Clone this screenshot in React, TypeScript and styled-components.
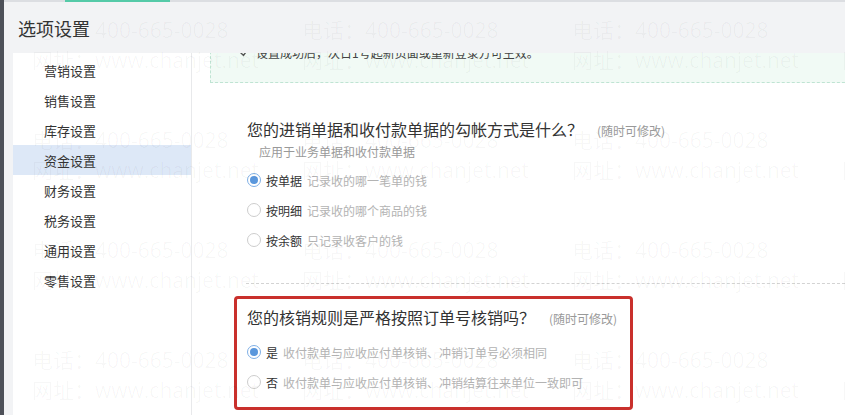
import React from "react";
import styled, { createGlobalStyle } from "styled-components";

const GlobalStyle = createGlobalStyle`
  html, body {
    margin: 0;
    padding: 0;
  }
  body {
    font-family: "Noto Sans CJK SC", "Noto Sans", sans-serif;
  }
`;

const navItems = [
  "营销设置",
  "销售设置",
  "库存设置",
  "资金设置",
  "财务设置",
  "税务设置",
  "通用设置",
  "零售设置",
];

const matchOptions = [
  { label: "按单据", desc: "记录收的哪一笔单的钱", checked: true },
  { label: "按明细", desc: "记录收的哪个商品的钱", checked: false },
  { label: "按余额", desc: "只记录收客户的钱", checked: false },
];

const ruleOptions = [
  { label: "是", desc: "收付款单与应收应付单核销、冲销订单号必须相同", checked: true },
  { label: "否", desc: "收付款单与应收应付单核销、冲销结算往来单位一致即可", checked: false },
];

const App = () => {
  return (
    <>
      <GlobalStyle />
      <Page>
        <LeftEdge />
        <Dialog>
          <TopStrip>
            <ActiveTab />
          </TopStrip>
          <Header>选项设置</Header>
          <Body>
            {/* 左侧菜单 */}
            <Sidebar>
              {navItems.map((item) => (
                <NavItem key={item} $active={item === "资金设置"}>
                  {item}
                </NavItem>
              ))}
            </Sidebar>

            {/* 右侧内容 */}
            <Main>
              <Notice>
                <svg width="10" height="10" viewBox="0 0 10 10">
                  <path
                    d="M1 4 L4.5 7.5 L9 1"
                    fill="none"
                    stroke="#555"
                    strokeWidth="1.4"
                  />
                </svg>
                <span>设置成功后，次日1号起新页面或重新登录方可生效。</span>
              </Notice>

              <QBlock $mt={25}>
                <QTitle>
                  您的进销单据和收付款单据的勾帐方式是什么？
                  <Hint>(随时可修改)</Hint>
                </QTitle>
                <SubText>应用于业务单据和收付款单据</SubText>
                <RadioGroup $mt={4}>
                  {matchOptions.map((o) => (
                    <RadioRow key={o.label}>
                      <Radio $checked={o.checked}>{o.checked && <Dot />}</Radio>
                      <RadioLabel>{o.label}</RadioLabel>
                      <RadioDesc>{o.desc}</RadioDesc>
                    </RadioRow>
                  ))}
                </RadioGroup>
              </QBlock>

              <Separator />

              <QBlock $mt={12} $highlight>
                <QTitle>
                  您的核销规则是严格按照订单号核销吗？
                  <Hint>(随时可修改)</Hint>
                </QTitle>
                <RadioGroup $mt={6}>
                  {ruleOptions.map((o) => (
                    <RadioRow key={o.label}>
                      <Radio $checked={o.checked}>{o.checked && <Dot />}</Radio>
                      <RadioLabel>{o.label}</RadioLabel>
                      <RadioDesc>{o.desc}</RadioDesc>
                    </RadioRow>
                  ))}
                </RadioGroup>
              </QBlock>
            </Main>
          </Body>
        </Dialog>

        {/* 水印 */}
        <Watermark>
          {Array.from({ length: 16 }).map((_, i) => (
            <WmCell key={i}>
              <div>电话：400-665-0028</div>
              <div>网址：www.chanjet.net</div>
            </WmCell>
          ))}
        </Watermark>
      </Page>
    </>
  );
};

const Page = styled.div`
  position: relative;
  width: 845px;
  height: 415px;
  overflow: hidden;
  display: flex;
  background: #f2f3f5;
`;

const LeftEdge = styled.div`
  width: 4px;
  flex-shrink: 0;
  background: #4e5159;
`;

const Dialog = styled.div`
  flex: 1;
  min-width: 0;
  display: flex;
  flex-direction: column;
`;

const TopStrip = styled.div`
  height: 2px;
  display: flex;
  background: #dcdee2;
`;

const ActiveTab = styled.div`
  width: 105px;
  margin-left: 61px;
  background: #55caa8;
`;

const Header = styled.div`
  height: 51px;
  display: flex;
  align-items: center;
  padding-left: 14px;
  font-size: 18px;
  color: #333;
`;

const Body = styled.div`
  flex: 1;
  min-height: 0;
  display: flex;
  padding-left: 9px;
`;

const Sidebar = styled.div`
  width: 178px;
  flex-shrink: 0;
  padding-top: 2px;
  background: #fff;
  border-right: 1px solid #e8e9eb;
`;

const NavItem = styled.div<{ $active?: boolean }>`
  height: 30px;
  display: flex;
  align-items: center;
  padding-left: 31px;
  font-size: 13px;
  color: #333;
  background: ${(p) => (p.$active ? "#dde8f7" : "transparent")};
`;

const Main = styled.div`
  flex: 1;
  min-width: 0;
  overflow: hidden;
  background: #fff;
  padding-left: 18px;
  display: flex;
  flex-direction: column;
  align-items: flex-start;
`;

const Notice = styled.div`
  align-self: stretch;
  margin-top: -21px;
  margin-right: -20px;
  padding: 10px 0 19px 28px;
  display: flex;
  align-items: center;
  gap: 7px;
  background: #f1faf5;
  border: 1px dashed #bfe4d3;
  font-size: 12px;
  line-height: 20px;
  color: #444;
`;

const QBlock = styled.div<{ $mt: number; $highlight?: boolean }>`
  margin-top: ${(p) => p.$mt}px;
  margin-left: 24px;
  padding: 6px 13px 10px 10px;
  border: 3px solid ${(p) => (p.$highlight ? "#c9302c" : "transparent")};
  border-radius: 4px;
`;

const QTitle = styled.div`
  display: flex;
  align-items: baseline;
  font-size: 16px;
  line-height: 24px;
  color: #333;
  white-space: nowrap;
`;

const Hint = styled.span`
  margin-left: 14px;
  font-size: 12px;
  color: #999;
`;

const SubText = styled.div`
  padding-left: 12px;
  font-size: 12px;
  line-height: 18px;
  color: #999;
`;

const RadioGroup = styled.div<{ $mt: number }>`
  margin-top: ${(p) => p.$mt}px;
  display: flex;
  flex-direction: column;
`;

const RadioRow = styled.div`
  height: 30px;
  display: flex;
  align-items: center;
  font-size: 12px;
  white-space: nowrap;
`;

const Radio = styled.span<{ $checked?: boolean }>`
  width: 14px;
  height: 14px;
  box-sizing: border-box;
  border-radius: 50%;
  border: 1px solid ${(p) => (p.$checked ? "#7fb0e6" : "#cdcdcd")};
  background: #fff;
  display: flex;
  align-items: center;
  justify-content: center;
  margin-right: 5px;
`;

const Dot = styled.span`
  width: 8px;
  height: 8px;
  border-radius: 50%;
  background: #5a97dc;
`;

const RadioLabel = styled.span`
  color: #333;
`;

const RadioDesc = styled.span`
  margin-left: 5px;
  color: #b3b3b3;
`;

const Separator = styled.div`
  align-self: stretch;
  margin-top: 15px;
  margin-left: 36px;
  border-top: 1px dashed #d3d3d3;
`;

const Watermark = styled.div`
  position: absolute;
  inset: 0;
  pointer-events: none;
  display: grid;
  grid-template-columns: repeat(4, 270px);
  grid-auto-rows: 110px;
  padding: 15px 0 0 32px;
`;

const WmCell = styled.div`
  font-family: "Open Sans", "Noto Sans CJK SC", sans-serif;
  font-size: 21px;
  line-height: 30px;
  color: rgba(0, 0, 0, 0.035);
  white-space: nowrap;
`;

export default App;
